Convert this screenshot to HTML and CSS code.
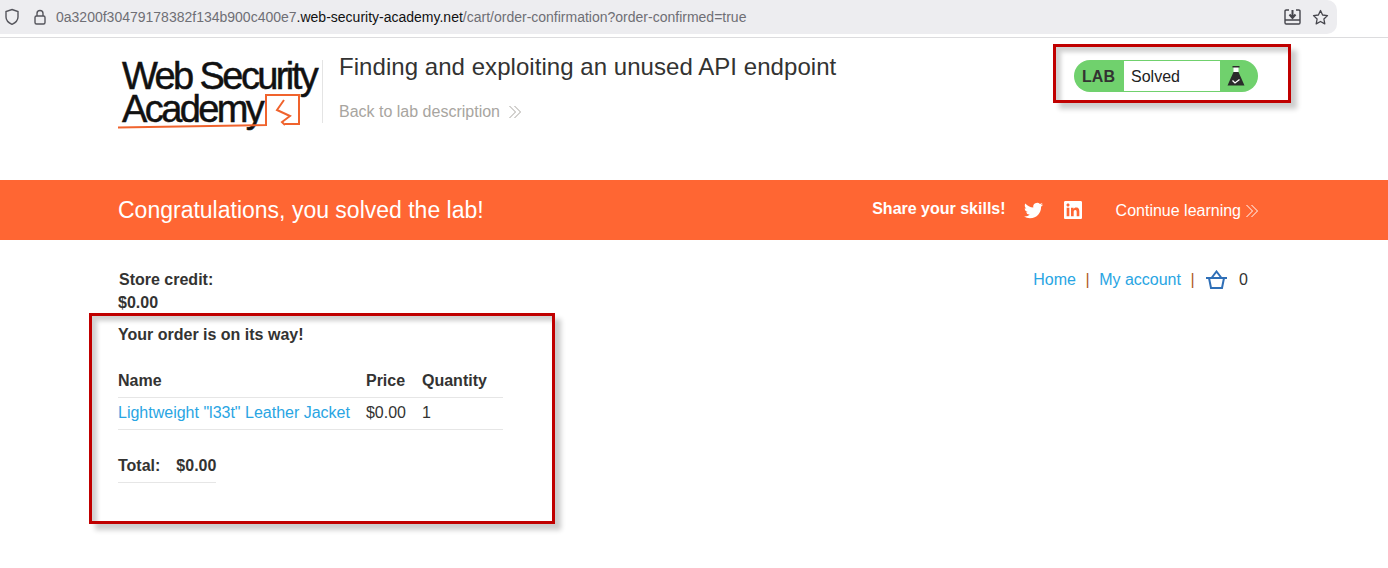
FILE: index.html
```html
<!doctype html>
<html lang="en">
<head>
<meta charset="utf-8">
<meta name="viewport" content="width=device-width,initial-scale=1">
<title>Finding and exploiting an unused API endpoint</title>
<link rel="stylesheet" href="styles.css">
</head>
<body>
<div class="browser">
  <div class="urlbar">
    <svg class="ico-shield" width="16" height="18" viewBox="0 0 16 18"><path d="M8 1.500 14 3.600V9c0 3.400-2.600 5.800-6 7.300C4.600 14.800 2 12.400 2 9V3.600z" fill="none" stroke="#55555c" stroke-width="1.400"/></svg>
    <svg class="ico-lock" width="14" height="16" viewBox="0 0 14 16"><path d="M4 7V4.500a3 3 0 0 1 6 0V7" fill="none" stroke="#55555c" stroke-width="1.400"/><rect x="2" y="7" width="10" height="8" rx="1.500" fill="none" stroke="#55555c" stroke-width="1.400"/></svg>
    <span class="url">0a3200f30479178382f134b900c400e7<b>.web-security-academy.net</b>/cart/order-confirmation?order-confirmed=true</span>
    <svg class="ico-save" width="17" height="16" viewBox="0 0 17 16"><path d="M5 1H2.200C1.500 1 1 1.500 1 2.200v11.600c0 .7.5 1.200 1.200 1.200h12.600c.7 0 1.200-.5 1.200-1.200V2.200C16 1.500 15.500 1 14.800 1H12M1 11h15" fill="none" stroke="#45454c" stroke-width="1.400"/><path d="M8.500 1v6.500M5.500 5.500l3 3.500 3-3.500" fill="none" stroke="#45454c" stroke-width="2"/></svg>
    <svg class="ico-star" width="17" height="17" viewBox="0 0 17 17"><path d="M8.500 1.500 10.600 6l4.900.6-3.600 3.400.9 4.900-4.300-2.400-4.300 2.400.9-4.900L1.500 6.600 6.400 6z" fill="none" stroke="#45454c" stroke-width="1.300" stroke-linejoin="round"/></svg>
  </div>
</div>

<header class="lab-head">
  <div class="logo">
    <span class="logo-line">Web Security</span>
    <span class="logo-line">Academy</span>
    <svg class="logo-mark" width="184" height="40" viewBox="0 0 184 40"><path d="M0 37.500C50 36.500 100 36 148 35V5H181V34H167" fill="none" stroke="#f0632d" stroke-width="2"/><path d="M166 10 159 20 172 26 164 32 167 35" fill="none" stroke="#f0632d" stroke-width="2"/></svg>
  </div>
  <div class="lab-title">
    <h2>Finding and exploiting an unused API endpoint</h2>
    <a class="back" href="#">Back to lab description
      <svg width="14" height="14" viewBox="0 0 14 14"><path d="M1.500 1 7.500 7l-6 6M6.500 1l6 6-6 6" fill="none" stroke="#a8a5a0" stroke-width="1"/></svg>
    </a>
  </div>
  <div class="status">
    <span class="status-lab">LAB</span>
    <span class="status-text">Solved</span>
    <span class="status-icon">
      <svg width="18" height="22" viewBox="0 0 18 22"><rect x="6.500" y="1" width="5" height="6" fill="#fff"/><rect x="5.500" y="1" width="7" height="1.500" fill="#2b2b2b"/><path d="M6.500 7h5L17.500 20.500H.5z" fill="#2b2b2b"/><path d="M5.500 15.500l2.500 2.500 4.500-3.500" fill="none" stroke="#fff" stroke-width="1.300"/></svg>
    </span>
  </div>
</header>

<section class="banner">
  <h4>Congratulations, you solved the lab!</h4>
  <strong class="share">Share your skills!</strong>
  <svg class="share-ico tw" width="19" height="19" viewBox="0 0 24 24"><path fill="#fff" d="M23.953 4.570a10 10 0 01-2.825.775 4.958 4.958 0 002.163-2.723c-.951.555-2.005.959-3.127 1.184a4.920 4.920 0 00-8.384 4.482C7.690 8.095 4.067 6.130 1.640 3.162a4.822 4.822 0 00-.666 2.475c0 1.710.870 3.213 2.188 4.096a4.904 4.904 0 01-2.228-.616v.060a4.923 4.923 0 003.946 4.827 4.996 4.996 0 01-2.212.085 4.936 4.936 0 004.604 3.417 9.867 9.867 0 01-6.102 2.105c-.390 0-.779-.023-1.170-.067a13.995 13.995 0 007.557 2.209c9.053 0 13.998-7.496 13.998-13.985 0-.210 0-.420-.015-.630A9.935 9.935 0 0024 4.590z"/></svg>
  <svg class="share-ico in" width="18" height="18" viewBox="0 0 24 24"><path fill="#fff" d="M20.447 20.452h-3.554v-5.569c0-1.328-.027-3.037-1.852-3.037-1.853 0-2.136 1.445-2.136 2.939v5.667H9.351V9h3.414v1.561h.046c.477-.9 1.637-1.850 3.370-1.850 3.601 0 4.267 2.370 4.267 5.455v6.286zM5.337 7.433c-1.144 0-2.063-.926-2.063-2.065 0-1.138.920-2.063 2.063-2.063 1.140 0 2.064.925 2.064 2.063 0 1.139-.925 2.065-2.064 2.065zm1.782 13.019H3.555V9h3.564v11.452zM22.225 0H1.771C.792 0 0 .774 0 1.729v20.542C0 23.227.792 24 1.771 24h20.451C23.200 24 24 23.227 24 22.271V1.729C24 .774 23.200 0 22.222 0h.003z"/></svg>
  <a class="continue" href="#">Continue learning
    <svg width="14" height="14" viewBox="0 0 14 14"><path d="M1.500 1 7.500 7l-6 6M6.500 1l6 6-6 6" fill="none" stroke="#fff" stroke-width="1"/></svg>
  </a>
</section>

<main class="content">
  <div class="top-row">
    <div class="credit"><strong class="credit-label">Store credit:</strong><strong>$0.00</strong></div>
    <nav class="nav">
      <a href="#">Home</a><span class="sep">|</span><a href="#">My account</a><span class="sep">|</span>
      <svg class="cart" width="23" height="20" viewBox="0 0 23 20"><path d="M1 8h21M4 8l2 10h11l2-10M6.500 8l5-6.500 5 6.500" fill="none" stroke="#2f6fb7" stroke-width="2"/></svg>
      <span class="count">0</span>
    </nav>
  </div>
  <strong class="msg">Your order is on its way!</strong>
  <table class="items">
    <tr class="head"><th>Name</th><th>Price</th><th>Quantity</th></tr>
    <tr><td><a href="#">Lightweight "l33t" Leather Jacket</a></td><td>$0.00</td><td>1</td></tr>
  </table>
  <table class="items total">
    <tr><th>Total:</th><th>$0.00</th></tr>
  </table>
</main>

<div class="mark mark-status"></div>
<div class="mark mark-order"></div>
</body>
</html>
```

FILE: styles.css
```css
:root{--orange:#ff6633;--green:#70d16d;--text:#333332;--link:#29a5e3;--line:#e6e6e6;--mark:#c00000}
*{box-sizing:border-box}
html,body{height:100%}
body{margin:0;background:#fff;color:var(--text);font-family:"Liberation Sans",Arial,sans-serif;font-size:16px;position:relative;overflow:hidden}
a{color:var(--link);text-decoration:none}

.browser{height:38px;border-bottom:1px solid #dcdcde;padding-bottom:3px}
.urlbar{width:1337px;height:34px;background:#ededf0;border-radius:0 10px 10px 0;display:flex;align-items:center;padding:0 8px 0 4px;font-size:14px;color:#6f6f75}
.ico-lock{margin-left:13px}
.url{margin-left:9px;flex:1}
.url b{font-weight:400;color:#111}
.ico-star{margin-left:11px}

.lab-head{height:142px;display:flex;align-items:flex-start;padding:0 130px 0 118px}
.logo{width:205px;height:63px;margin-top:22px;border-right:1px solid #e4e4e4;position:relative;padding:0 0 0 4px;color:#111;font-size:38px;line-height:33px;letter-spacing:-2.6px}
.logo-line{display:block;white-space:nowrap;-webkit-text-stroke:.5px #111}
.logo-mark{position:absolute;left:0;top:30px;overflow:visible}
.lab-title{margin-left:16px;flex:1}
.lab-title h2{margin:14px 0 0;font-size:24px;line-height:29px;font-weight:400;letter-spacing:.05px;color:var(--text)}
.back{display:inline-flex;align-items:center;gap:8px;margin-top:21px;color:#a8a5a0;line-height:20px}
.status{width:184px;height:32px;margin-top:22px;background:var(--green);border-radius:16px;display:flex;align-items:stretch;overflow:hidden}
.status-lab{width:49px;text-align:center;font-weight:700;line-height:34px}
.status-text{width:98px;background:#fff;border:1px solid var(--green);padding-left:7px;line-height:32px;color:#222}
.status-icon{flex:1;display:flex;align-items:center;justify-content:flex-start;padding-left:6px}

.banner{height:60px;background:var(--orange);color:#fff;display:flex;align-items:center;padding:0 129px 0 118px}
.banner h4{margin:0;font-size:23px;font-weight:400;flex:1}
.share{margin-top:-2px}
.share-ico{margin-left:18px}
.in{margin-left:21px}
.continue{display:inline-flex;align-items:center;gap:4px;color:#fff;margin:1px 0 0 34px}

.content{padding:28px 140px 0 118px}
.top-row{display:flex;justify-content:space-between}
.credit{line-height:23px;height:46px}
.credit strong{display:block}
.credit-label{padding-left:1px}
.nav{display:flex;align-items:flex-start;line-height:24px}
.sep{margin:0 9.5px;color:#b05a1c}
.cart{margin:2px 0 0 1px}
.count{margin-left:11px}
.msg{display:block;margin-top:11px;line-height:20px}
.items{border-collapse:collapse;margin-top:21px}
.items th,.items td{text-align:left;padding:0 16px 0 0;height:32px;border-bottom:1px solid var(--line);font-size:16px}
.items .head th{height:31px}
.total{margin-top:21px}
.total th{height:32px}
.total th:last-child{padding-right:0}

.mark{position:absolute;border:3px solid var(--mark);box-shadow:6px 6px 5px rgba(0,0,0,.2),inset 5px 5px 4px rgba(0,0,0,.18)}
.mark-status{left:1053px;top:44px;width:238px;height:59px}
.mark-order{left:89px;top:313px;width:466px;height:211px}
```
